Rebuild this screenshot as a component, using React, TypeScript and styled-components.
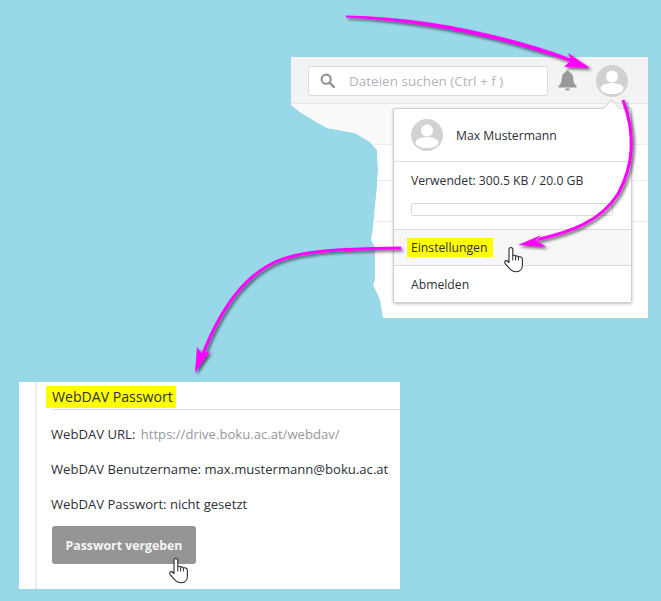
import React from "react";
import styled, { createGlobalStyle } from "styled-components";

const Global = createGlobalStyle`
  html, body { margin: 0; padding: 0; background: #99d8e9; }
  body { font-family: "Open Sans", "Noto Sans", sans-serif; color: #2e3138; }
`;

const Canvas = styled.div`
  position: relative;
  width: 661px;
  height: 601px;
  overflow: hidden;
  background: #99d8e9;
`;

const AppPanel = styled.section`
  position: absolute;
  left: 291px;
  top: 57px;
  width: 357px;
  height: 261px;
  display: flex;
  flex-direction: column;
  background: #fff;
  border-top-right-radius: 5px;
  clip-path: polygon(0 0, 100% 0, 100% 100%, 92px 100%, 89px 243px, 86px 236px, 82px 228px, 84px 223px, 84px 190px, 80px 183px, 82px 170px, 86px 130px, 87px 113px, 86px 93px, 79px 85px, 64px 76px, 36px 71px, 22px 63px, 9px 55px, 0 48px);
`;

const Toolbar = styled.header`
  flex: none;
  height: 47px;
  box-sizing: border-box;
  padding: 9px 20px 8px 17px;
  display: flex;
  align-items: center;
  background: #f3f3f5;
  border-bottom: 1px solid #e6e6ec;
`;

const SearchBox = styled.div`
  width: 240px;
  height: 30px;
  box-sizing: border-box;
  margin-right: 10px;
  padding-left: 11px;
  display: flex;
  align-items: center;
  gap: 14px;
  background: #fff;
  border: 1px solid #d9d9e6;
  border-radius: 3px;
  font-size: 13.5px;
  color: #b3b3bb;
`;

const BellSlot = styled.div`
  width: 19px;
  height: 21px;
  margin-right: 19px;
  flex: none;
`;

const TableBand = styled.div<{ $h: number; $bg: string }>`
  flex: none;
  height: ${(p) => p.$h}px;
  box-sizing: border-box;
  background: ${(p) => p.$bg};
  border-bottom: 1px solid #eeeeee;
`;

const Menu = styled.nav`
  position: absolute;
  left: 102px;
  top: 51px;
  width: 239px;
  height: 195px;
  box-sizing: border-box;
  display: flex;
  flex-direction: column;
  background: #fff;
  border: 1px solid #d0d0d0;
  border-radius: 2px;
  box-shadow: 0 1px 3px rgba(0, 0, 0, 0.25);
  font-size: 12.2px;
  line-height: 17px;
  &::before {
    content: "";
    position: absolute;
    right: 13px;
    top: -7px;
    width: 12px;
    height: 12px;
    background: #fff;
    border-left: 1px solid #d0d0d0;
    border-top: 1px solid #d0d0d0;
    transform: rotate(45deg);
  }
`;

const MenuHead = styled.div`
  position: relative;
  height: 52px;
  flex: none;
  padding-left: 17px;
  display: flex;
  align-items: center;
  gap: 13px;
  border-bottom: 1px solid #dcdcdc;
`;

const Usage = styled.div`
  height: 68px;
  flex: none;
  box-sizing: border-box;
  padding: 10px 17px 0;
  border-bottom: 1px solid #dcdcdc;
`;

const UsageBar = styled.div`
  width: 202px;
  height: 13px;
  box-sizing: border-box;
  margin-top: 14px;
  border: 1px solid #dcdcdc;
  border-radius: 2px;
`;

const MenuRow = styled.div<{ $active?: boolean }>`
  height: 36px;
  flex: none;
  box-sizing: border-box;
  padding-left: 13px;
  display: flex;
  align-items: center;
  background: ${(p) => (p.$active ? "#f7f7f7" : "#fff")};
  border-bottom: ${(p) => (p.$active ? "1px solid #dcdcdc" : "none")};
`;

const Marker = styled.span`
  display: inline-block;
  background: #ffff00;
  padding: 0 6px 0 4px;
  line-height: 19px;
`;

const PlainLabel = styled.span`
  padding-left: 4px;
`;

const SettingsPanel = styled.section`
  position: absolute;
  left: 19px;
  top: 382px;
  width: 381px;
  height: 207px;
  box-sizing: border-box;
  background: #fff;
  padding-left: 16px;
`;

const SettingsBody = styled.div`
  height: 100%;
  box-sizing: border-box;
  padding-left: 14px;
  border-left: 2px solid #ececf0;
  display: flex;
  flex-direction: column;
  align-items: flex-start;
  gap: 17px;
  font-size: 13.1px;
`;

const Heading = styled.div`
  align-self: stretch;
  height: 28px;
  box-sizing: border-box;
  margin: 0 0 -2px 1px;
  padding-top: 4px;
  border-bottom: 1px solid #dcdce2;
`;

const HeadingMark = styled.span`
  display: inline-block;
  margin-left: -6px;
  padding: 0 3px 0 6px;
  background: #ffff00;
  font-size: 14.1px;
  line-height: 22px;
`;

const InfoRow = styled.div`
  line-height: 18px;
  white-space: nowrap;
`;

const Muted = styled.span`
  margin-left: 2px;
  color: #97979f;
`;

const PrimaryButton = styled.div`
  width: 144px;
  height: 38px;
  margin: -4px 0 0 1px;
  display: flex;
  align-items: center;
  justify-content: center;
  background: #959595;
  border-radius: 3px;
  color: #f5f5f5;
  font-size: 12.3px;
  font-weight: 700;
`;

const Overlay = styled.svg`
  position: absolute;
  left: 0;
  top: 0;
  width: 661px;
  height: 601px;
  pointer-events: none;
`;

const Avatar = ({ size = 32 }: { size?: number }) => (
  <svg width={size} height={size} viewBox="0 0 32 32" style={{ flex: "none" }}>
    <defs>
      <clipPath id="avclip">
        <circle cx="16" cy="16" r="16" />
      </clipPath>
    </defs>
    <circle cx="16" cy="16" r="16" fill="#d2d2d2" />
    <g clipPath="url(#avclip)" fill="#fff">
      <circle cx="16" cy="11.5" r="6" />
      <ellipse cx="16" cy="23.5" rx="11.5" ry="5.5" />
    </g>
  </svg>
);

const Search = () => (
  <svg width="15" height="15" viewBox="0 0 16 16" style={{ flex: "none" }}>
    <circle cx="6.6" cy="6.6" r="4.9" fill="none" stroke="#94949c" strokeWidth="2.3" />
    <path d="M10.3 10.3 L15 15" stroke="#94949c" strokeWidth="2.6" strokeLinecap="round" />
  </svg>
);

const Bell = () => (
  <svg width="19" height="21" viewBox="0 0 19 21" style={{ display: "block" }}>
    <path
      d="M9.5 0.5 C10.5 0.5 11.1 1.1 11.1 2 C14 2.8 15 5.2 15.2 8 C15.4 11.8 16 14 18.5 16 L18.5 17.5 L0.5 17.5 L0.5 16 C3 14 3.6 11.8 3.8 8 C4 5.2 5 2.8 7.9 2 C7.9 1.1 8.5 0.5 9.5 0.5 Z"
      fill="#999"
    />
    <path d="M7 18.5 C7.3 20 8.2 20.7 9.5 20.7 C10.8 20.7 11.7 20 12 18.5 Z" fill="#999" />
  </svg>
);

const HAND =
  "M6.8 0.5 C8 0.5 8.8 1.3 8.8 2.6 L8.8 8.6 C9.8 8 11.2 8.2 11.6 9.2 C12.6 8.6 14 8.9 14.4 10 C15.6 9.5 18.4 10 18.4 12.4 L18.4 18 C18.4 22 16 24.8 12.4 24.8 C9.4 24.8 7.4 23.8 5.4 21.4 L1.2 16.6 C0.2 15.2 0.8 13.8 2 13.6 C3.2 13.4 4.2 14.4 5 15.6 L5 2.6 C5 1.3 5.6 0.5 6.8 0.5 Z";

const Hand = ({ x, y }: { x: number; y: number }) => (
  <g transform={`translate(${x} ${y})`}>
    <path d={HAND} fill="#fff" stroke="#2b2b2b" strokeWidth="1.1" strokeLinejoin="round" />
    <path d="M8.8 8.6 L8.8 13.5 M11.6 9.2 L11.6 13.5 M14.4 10 L14.4 13.5" stroke="#2b2b2b" strokeWidth="1" fill="none" />
  </g>
);

export default function App() {
  return (
    <Canvas>
      <Global />
      <AppPanel>
        <Toolbar>
          <SearchBox>
            <Search />
            <span>Dateien suchen (Ctrl + f )</span>
          </SearchBox>
          <BellSlot>
            <Bell />
          </BellSlot>
          <Avatar />
        </Toolbar>
        <TableBand $h={41} $bg="#fafafa" />
        <TableBand $h={36} $bg="#fff" />
        <TableBand $h={41} $bg="#fff" />
        <Menu>
          <MenuHead>
            <Avatar />
            <span>Max Mustermann</span>
          </MenuHead>
          <Usage>
            <div>Verwendet: 300.5 KB / 20.0 GB</div>
            <UsageBar />
          </Usage>
          <MenuRow $active>
            <Marker>Einstellungen</Marker>
          </MenuRow>
          <MenuRow>
            <PlainLabel>Abmelden</PlainLabel>
          </MenuRow>
        </Menu>
      </AppPanel>

      <SettingsPanel>
        <SettingsBody>
          <Heading>
            <HeadingMark>WebDAV Passwort</HeadingMark>
          </Heading>
          <InfoRow>
            WebDAV URL: <Muted>https://drive.boku.ac.at/webdav/</Muted>
          </InfoRow>
          <InfoRow>WebDAV Benutzername: max.mustermann@boku.ac.at</InfoRow>
          <InfoRow>WebDAV Passwort: nicht gesetzt</InfoRow>
          <PrimaryButton>Passwort vergeben</PrimaryButton>
        </SettingsBody>
      </SettingsPanel>

      <Overlay viewBox="0 0 661 601">
        <defs>
          <filter id="arrowShadow" x="-20%" y="-20%" width="140%" height="140%">
            <feDropShadow dx="2" dy="2" stdDeviation="1.6" floodColor="#000" floodOpacity="0.6" />
          </filter>
        </defs>
        <g filter="url(#arrowShadow)" fill="#ff00ff">
          <path d="M346 15.5 C420 17 500 32 572 59 L571 62 C500 37 420 21 346 17.5 Z" />
          <path d="M568 53 L590 68 L564 67 L571 60 Z" />
          <path d="M623 100 C636 135 634 165 618 194 C600 222 570 232 538 239.5" fill="none" stroke="#ff00ff" strokeWidth="3" />
          <path d="M518 245 L541 235 L536 240 L546 247 Z" />
          <path d="M401 248 C340 249 300 250 273 263 C245 277 222 305 202 356" fill="none" stroke="#ff00ff" strokeWidth="3" />
          <path d="M197 347 L202 354 L210 351 L195 373 Z" />
        </g>
        <Hand x={504} y={247} />
        <Hand x={169} y={558} />
      </Overlay>
    </Canvas>
  );
}
